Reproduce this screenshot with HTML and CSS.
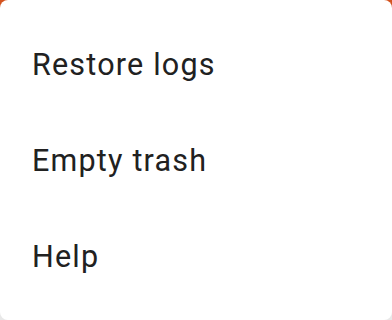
FILE: index.html
```html
<!DOCTYPE html>
<html>
<head>
<meta charset="utf-8">
<link rel="stylesheet" href="styles.css">
</head>
<body>
<div class="menu">
  <div class="item">Restore logs</div>
  <div class="item">Empty trash</div>
  <div class="item">Help</div>
</div>
</body>
</html>
```
FILE: styles.css
```css
html, body {
  margin: 0;
  width: 392px;
  height: 320px;
  overflow: hidden;
}
body {
  background: linear-gradient(to bottom, #d4531f 0, #d4531f 50%, #e8e8e8 50%, #e8e8e8 100%);
}
.menu {
  width: 392px;
  height: 320px;
  box-sizing: border-box;
  background: #ffffff;
  border-radius: 8px;
  padding: 16px 0;
  display: flex;
  flex-direction: column;
}
.item {
  height: 96px;
  display: flex;
  align-items: center;
  padding-left: 32px;
  font-family: Roboto, "Noto Sans", sans-serif;
  font-size: 30.5px;
  color: #212121;
  letter-spacing: 1.2px;
}
```
